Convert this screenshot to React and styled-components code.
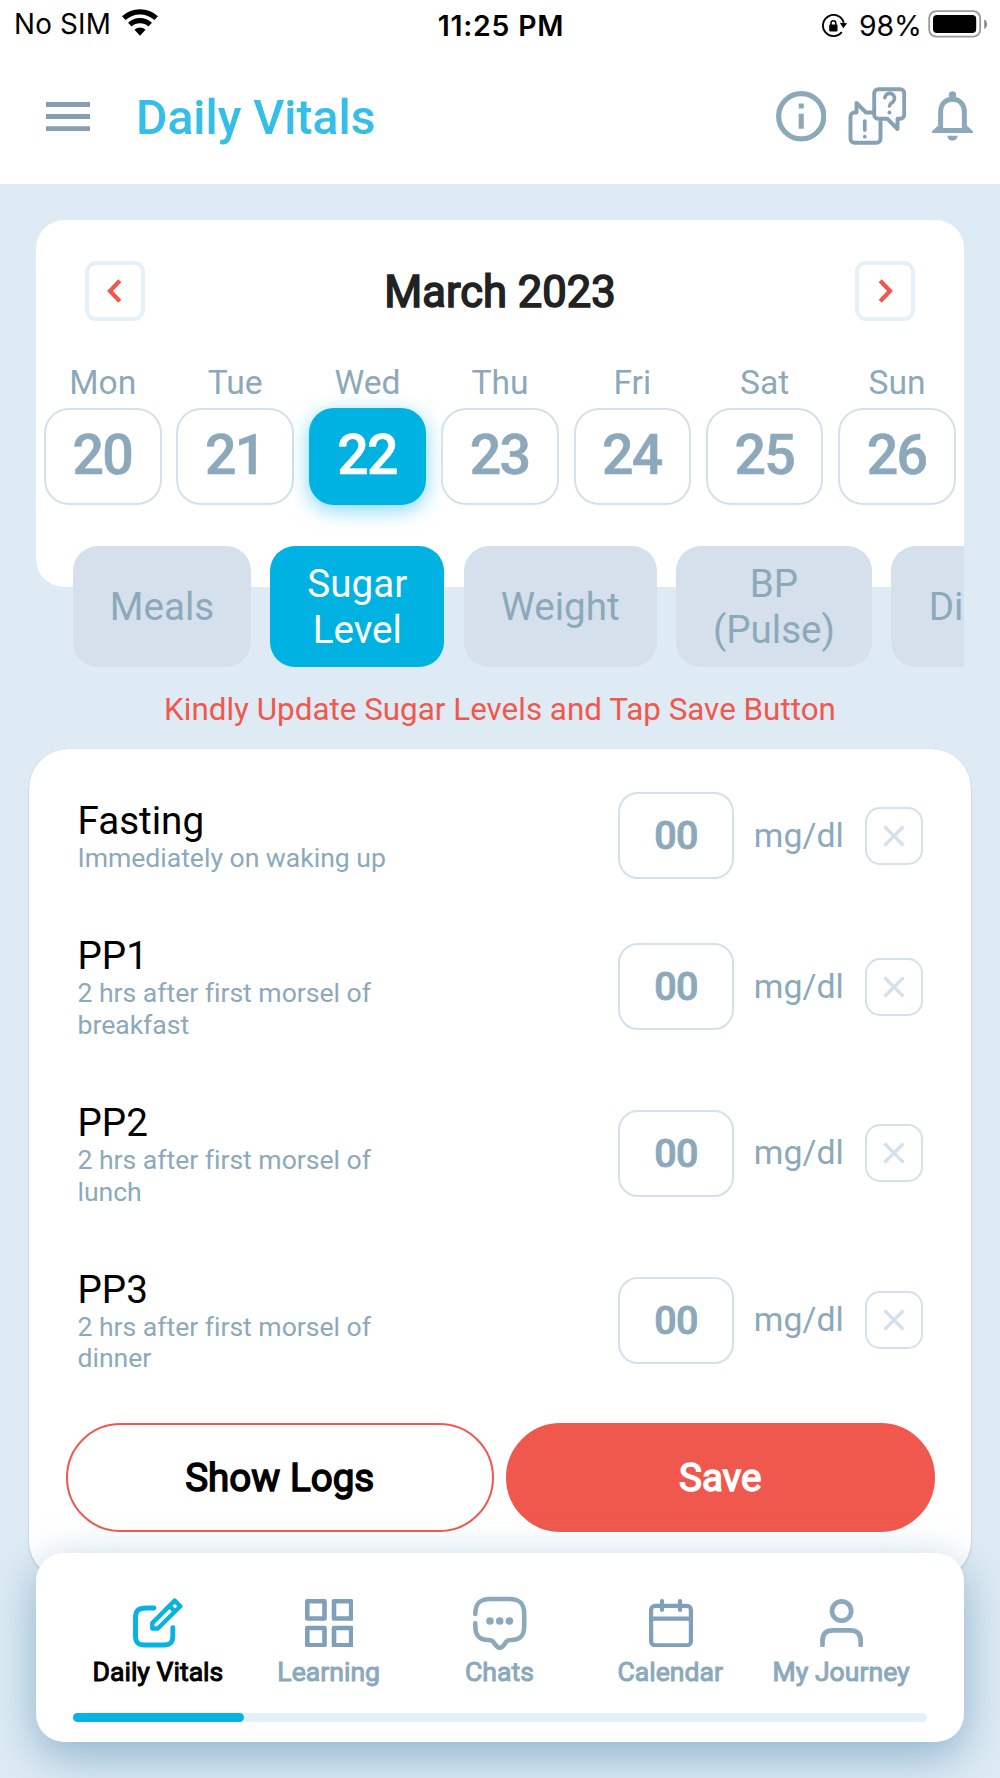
import React, { useState } from 'react';
import styled, { createGlobalStyle, css } from 'styled-components';

const GlobalStyle = createGlobalStyle`
  :root {
    --page: #deebf4;
    --steel: #8ca9bc;
    --line: #d4e1ed;
    --pale: #e4f1f9;
    --blue: #00b2e1;
    --coral: #f1584d;
  }

  * {
    box-sizing: border-box;
  }

  body {
    margin: 0;
    font-family: Roboto, 'Liberation Sans', sans-serif;
  }

  button {
    font-family: inherit;
    padding: 0;
    cursor: pointer;
  }

  svg {
    display: block;
    flex-shrink: 0;
  }
`;

// Styled components
const Screen = styled.div`
  display: flex;
  flex-direction: column;
  width: 1000px;
  height: 1778px;
  overflow: hidden;
  background: var(--page);
`;

const StatusBar = styled.div`
  display: grid;
  grid-template-columns: 1fr auto 1fr;
  height: 50px;
  padding: 0 12px 0 14px;
  background: white;
  color: black;
  font-family: Inter, 'Liberation Sans', sans-serif;
  font-size: 27.8px;
  line-height: 49px;
`;

const StatusLeft = styled.div`
  display: flex;
  gap: 11px;
  letter-spacing: 0.2px;

  svg {
    margin-top: 9px;
  }
`;

const Clock = styled.div`
  font-size: 28.4px;
  font-weight: 600;
  line-height: 52px;
  letter-spacing: 0.8px;
`;

const StatusRight = styled.div`
  display: flex;
  justify-content: flex-end;
  line-height: 52px;
  font-size: 28.4px;

  svg:first-child {
    margin: 14px 11px 0 0;
  }

  svg:last-child {
    margin: 10px 0 0 6px;
  }
`;

const Header = styled.header`
  display: flex;
  align-items: center;
  height: 133.5px;
  padding: 0 27px 0 46px;
  background: white;
  color: var(--steel);
`;

const Title = styled.h1`
  flex: 1;
  margin: 2px 0 0 46px;
  font-size: 48.3px;
  font-weight: 500;
  line-height: 56px;
  letter-spacing: -0.1px;
  color: #35bfe8;
`;

const HeaderActions = styled.div`
  display: flex;
  align-items: center;
  margin-top: -1px;

  svg:nth-child(2) {
    margin: 0 26px 0 21.5px;
  }
`;

const CalendarCard = styled.section`
  flex-shrink: 0;
  height: 367px;
  margin: 36.5px 36px 0;
  padding-top: 41px;
  border-radius: 28px;
  background: white;
`;

const MonthRow = styled.div`
  display: flex;
  align-items: center;
  justify-content: space-between;
  margin: 0 49px;
`;

const MonthButton = styled.button`
  display: grid;
  place-items: center;
  width: 60px;
  height: 60px;
  border: 4.5px solid var(--pale);
  border-radius: 11px;
  background: white;
  color: var(--coral);
`;

const Month = styled.h2`
  margin: 3px 0 0;
  font-size: 43.5px;
  font-weight: 400;
  line-height: 52px;
  color: #222;
  -webkit-text-stroke: 1.6px #222;
`;

const Week = styled.div`
  display: grid;
  grid-template-columns: repeat(7, 117.5px);
  column-gap: 14.9px;
  margin: 42px 0 0 8px;
`;

const Day = styled.div`
  text-align: center;
  color: var(--steel);
  font-size: 33.6px;
  line-height: 40px;
`;

const DayNumber = styled.button`
  display: block;
  width: 100%;
  height: 97px;
  margin-top: 5px;
  padding: 0 1px 1px 0;
  border: 2.4px solid var(--line);
  border-radius: 25px;
  background: white;
  color: var(--steel);
  font-size: 55.5px;
  font-weight: 500;
  line-height: 88px;
  letter-spacing: -1.8px;
  -webkit-text-stroke: 0.6px currentColor;

  ${({ $active }) => $active && css`
    border-color: var(--blue);
    background: var(--blue);
    color: white;
    box-shadow: 0 5px 20px rgba(0, 178, 255, 0.5);
  `}
`;

const Tabs = styled.div`
  display: flex;
  flex-shrink: 0;
  gap: 19.2px;
  margin: -41px 36px 0;
  padding-left: 37px;
  overflow: hidden;
`;

const Tab = styled.button`
  flex-shrink: 0;
  width: ${({ $width }) => $width}px;
  height: 121px;
  border: 0;
  border-radius: 25px;
  background: ${({ $active }) => ($active ? 'var(--blue)' : '#d5e0ec')};
  color: ${({ $active }) => ($active ? 'white' : 'var(--steel)')};
  font-size: 38.6px;
  line-height: 45.4px;
  white-space: pre-line;
`;

const Notice = styled.p`
  flex-shrink: 0;
  height: 82px;
  margin: 0;
  padding-top: 2px;
  text-align: center;
  font-size: 31.4px;
  line-height: 82px;
  color: var(--coral);
`;

const LevelsCard = styled.section`
  flex-shrink: 0;
  height: 832px;
  margin: 0 29px;
  padding: 19.4px 36.5px 0;
  border-radius: 40px;
  background: white;
  box-shadow: 0 1px 2px rgba(80, 110, 140, 0.4);
`;

const LevelRow = styled.div`
  display: flex;
  align-items: center;
  height: ${({ $tall }) => ($tall ? 166.7 : 135)}px;
  padding: 0 12px 0 12px;
`;

const LevelText = styled.div`
  flex: 1;

  h3 {
    margin: 0;
    padding-top: 1px;
    font-size: 38.6px;
    font-weight: 400;
    line-height: 44.3px;
    color: black;
  }

  p {
    max-width: 312px;
    margin: -1px 0 0;
    font-size: 26.6px;
    line-height: 31.4px;
    letter-spacing: -0.03px;
    color: var(--steel);
  }
`;

const LevelInput = styled.input`
  width: 116px;
  height: 87px;
  padding: 0;
  border: 2.4px solid var(--line);
  border-radius: 20px;
  outline: none;
  background: white;
  text-align: center;
  font: 500 39.5px Roboto, sans-serif;
  letter-spacing: -0.6px;
  color: var(--steel);

  &::placeholder {
    color: var(--steel);
    opacity: 1;
    -webkit-text-stroke: 0.9px var(--steel);
  }
`;

const Unit = styled.span`
  width: 130.5px;
  padding-right: 1px;
  text-align: center;
  font-size: 33.8px;
  line-height: 40px;
  color: var(--steel);
`;

const ClearButton = styled.button`
  display: grid;
  place-items: center;
  width: 58px;
  height: 58px;
  border: 2.4px solid var(--line);
  border-radius: 15px;
  background: white;
  color: var(--line);
`;

const Actions = styled.div`
  display: grid;
  grid-template-columns: 1fr 1fr;
  gap: 12px;
  margin-top: 19.6px;
`;

const ActionButton = styled.button`
  height: 109px;
  border: 2.4px solid var(--coral);
  border-radius: 55px;
  background: ${({ $filled }) => ($filled ? 'var(--coral)' : 'white')};
  color: ${({ $filled }) => ($filled ? 'white' : 'black')};
  font-size: 38.6px;
  line-height: 46px;
  -webkit-text-stroke: 1.5px currentColor;
`;

const BottomNav = styled.nav`
  position: relative;
  flex-shrink: 0;
  height: 189px;
  margin: -28px 36px 0;
  padding: 43px 37px 0;
  border-radius: 28px;
  background: white;
  box-shadow: 0 14px 46px rgba(80, 135, 175, 0.57);
`;

const NavItems = styled.div`
  display: grid;
  grid-template-columns: repeat(5, 1fr);
`;

const NavItem = styled.button`
  display: flex;
  flex-direction: column;
  align-items: center;
  border: 0;
  background: none;
  color: var(--steel);
`;

const NavIcon = styled.div`
  display: grid;
  place-items: center;
  height: 54px;
  color: ${({ $color }) => $color || 'var(--steel)'};
`;

const NavLabel = styled.span`
  margin-top: 6px;
  padding-right: 1px;
  font-size: 26.6px;
  line-height: 32px;
  white-space: nowrap;
  color: ${({ $active }) => ($active ? 'black' : 'var(--steel)')};
  -webkit-text-stroke: 1px currentColor;
`;

const Track = styled.div`
  height: 9.6px;
  margin-top: 24.5px;
  border-radius: 5px;
  background: var(--pale);
`;

const TrackFill = styled.div`
  width: 20%;
  height: 100%;
  border-radius: 5px;
  background: #09b3e0;
`;

// Icons
const WifiIcon = () => (
  <svg width="36" height="27" viewBox="0 0 36 27" fill="none" stroke="black" strokeWidth="5.2">
    <path d="M1.8 9.1a24 24 0 0 1 32.4 0M7.8 15.7a15 15 0 0 1 20.4 0" />
    <path d="M18 26.7l-5.5-6a8.2 8.2 0 0 1 11 0z" fill="black" stroke="none" />
  </svg>
);

const RotationLockIcon = () => (
  <svg width="26" height="24" viewBox="0 0 26 24" fill="none" stroke="black" strokeWidth="1.9">
    <path d="M21.8 8.8A10.6 10.6 0 1 0 19.8 18.2" />
    <path d="M17.8 8.8l7.4 0.4-3.9 5z" fill="black" stroke="none" />
    <path d="M9 11V9.2a2.4 2.4 0 0 1 4.8 0V11" strokeWidth="1.5" />
    <rect x="7.2" y="10.6" width="8.3" height="6.9" rx="1" fill="black" stroke="none" />
  </svg>
);

const BatteryIcon = () => (
  <svg width="60" height="28" viewBox="0 0 60 28">
    <rect x="1.2" y="1.2" width="51" height="25.4" rx="7" fill="none" stroke="#999" strokeWidth="1.8" />
    <rect x="5" y="5" width="43.2" height="18" rx="4" fill="black" />
    <path d="M56.2 9.5c3.8 1.3 3.8 8 0 9.4z" fill="#888" />
  </svg>
);

const MenuIcon = () => (
  <svg width="44" height="30" viewBox="0 0 44 30" fill="none" stroke="#879fb3" strokeWidth="4.8">
    <path d="M0 2.5h44M0 14.5h44M0 26.7h44" />
  </svg>
);

const InfoIcon = () => (
  <svg width="50.5" height="50.5" viewBox="0 0 50.5 50.5">
    <circle cx="25.25" cy="25.25" r="22.6" fill="none" stroke="currentColor" strokeWidth="5.2" />
    <path d="M22.7 12.6h5.1v5h-5.1zM22.7 22.7h5.1v15h-5.1z" fill="currentColor" />
  </svg>
);

const QuestionsIcon = () => (
  <svg width="58.5" height="58" viewBox="0 0 58.5 58" fill="none" stroke="#87a1b4" strokeWidth="3.9" strokeLinejoin="round">
    <path d="M30.2 2.3h22a4 4 0 0 1 4 4v21.4a4 4 0 0 1-4 4h-2.7V42L39.2 31.7h-9a4 4 0 0 1-4-4V6.3a4 4 0 0 1 4-4z" />
    <path d="M32.5 33.5v18.2a4 4 0 0 1-4 4h-22a4 4 0 0 1-4-4V29.5a4 4 0 0 1 4-4h2V16l9.5 9.5h7" />
    <path d="M16.8 34v9M36.8 10.6a4.9 4.9 0 1 1 8.2 4.2c-1.8 1.5-3.4 2-3.5 4.2" strokeLinecap="round" strokeWidth="3.7" />
    <circle cx="16.8" cy="49.7" r="1.9" fill="#87a1b4" stroke="none" />
    <circle cx="41.5" cy="25.5" r="2" fill="#87a1b4" stroke="none" />
  </svg>
);

const BellIcon = () => (
  <svg width="41" height="50" viewBox="0 0 41 50" fill="currentColor">
    <circle cx="20.5" cy="4" r="3.7" />
    <path d="M8.6 39V21.5c0-8.5 4.8-13.3 11.9-13.3s11.9 4.8 11.9 13.3V39" fill="none" stroke="currentColor" strokeWidth="5" />
    <path d="M6.1 34.5L0 40.3V42h41v-1.7l-6.1-5.8V37H6.1z" />
    <path d="M15.4 44.7h10.2a5.1 5 0 0 1-10.2 0z" />
  </svg>
);

const ChevronIcon = ({ right }) => (
  <svg width="18" height="24" viewBox="0 0 18 24" fill="none" stroke="currentColor" strokeWidth="4.2">
    <path d={right ? 'M4.2 1.8L14 12 4.2 22.2' : 'M13.8 1.8L4 12l9.8 10.2'} />
  </svg>
);

const CrossIcon = () => (
  <svg width="22" height="22" viewBox="0 0 22 22" fill="none" stroke="currentColor" strokeWidth="3.2">
    <path d="M1.5 1.5l19 19M20.5 1.5l-19 19" />
  </svg>
);

const EditIcon = () => (
  <svg width="50" height="50" viewBox="0 0 50 50" fill="none" stroke="currentColor" strokeWidth="4.9" strokeLinecap="round" strokeLinejoin="round">
    <path d="M21 10h-7.5C5.5 10 2.5 12.5 2.5 20v18c0 6.5 3 9 9 9H31c6 0 8.8-2.5 8.8-9v-8.2" />
    <path d="M19.3 30.5v-5.4L41.7 2.6l5.6 5.6-22.5 22.3zM36.5 8l5.4 5.4" strokeWidth="4.4" />
  </svg>
);

const GridIcon = () => (
  <svg width="48.5" height="48.5" viewBox="0 0 48.5 48.5" fill="none" stroke="currentColor" strokeWidth="4.6" strokeLinejoin="round">
    <path d="M2.3 2.3h17.2v17.2H2.3zM29 2.3h17.2v17.2H29zM2.3 29h17.2v17.2H2.3zM29 29h17.2v17.2H29z" />
  </svg>
);

const ChatIcon = () => (
  <svg width="53.5" height="54" viewBox="0 -0.7 53.5 54" fill="none" stroke="currentColor" strokeWidth="4.6" strokeLinecap="round">
    <path d="M2.3 17.2C2.3 6.5 6.8 2.3 17.5 2.3H36c10.7 0 15.2 4.2 15.2 14.9V29c0 10.7-4.5 14.2-13.2 14.3-5 .1-4.5 1.7-7 4.9-3 4-5.5 4-8.5 0-2.5-3.2-2-4.8-7-4.9C6.8 43.2 2.3 39.7 2.3 29v-2.4" />
    <g fill="currentColor" stroke="none">
      <circle cx="17" cy="24.3" r="3.8" />
      <circle cx="26.7" cy="24.3" r="3.8" />
      <circle cx="36.4" cy="24.3" r="3.8" />
    </g>
  </svg>
);

const CalendarIcon = () => (
  <svg width="44" height="48.5" viewBox="0 0 44 48.5" fill="none" stroke="currentColor" strokeWidth="4.2" strokeLinecap="round">
    <rect x="2.1" y="6.8" width="39.8" height="39.5" rx="4" />
    <path d="M2.1 19.7h39.8M13 2.1v8.8M31 2.1v8.8" />
  </svg>
);

const PersonIcon = () => (
  <svg width="43.2" height="48.5" viewBox="0 0 43.2 48.5" fill="none" stroke="currentColor" strokeWidth="4.7" strokeLinecap="round">
    <circle cx="21.6" cy="12" r="9.6" />
    <path d="M2.5 46v-4c0-7 3.5-10.7 10.5-10.7h17.2c7 0 10.5 3.7 10.5 10.7v4" />
  </svg>
);

const days = [
  { name: 'Mon', date: 20 },
  { name: 'Tue', date: 21 },
  { name: 'Wed', date: 22 },
  { name: 'Thu', date: 23 },
  { name: 'Fri', date: 24 },
  { name: 'Sat', date: 25 },
  { name: 'Sun', date: 26 },
];

const tabs = [
  { label: 'Meals', width: 178 },
  { label: 'Sugar\nLevel', width: 174.2 },
  { label: 'Weight', width: 193.2 },
  { label: 'BP\n(Pulse)', width: 196 },
  { label: 'Diet', width: 143 },
];

const levels = [
  { name: 'Fasting', hint: 'Immediately on waking up' },
  { name: 'PP1', hint: '2 hrs after first morsel of breakfast', tall: true },
  { name: 'PP2', hint: '2 hrs after first morsel of lunch', tall: true },
  { name: 'PP3', hint: '2 hrs after first morsel of dinner', tall: true },
];

const navItems = [
  { label: 'Daily Vitals', icon: <EditIcon />, color: '#09b3e0', active: true },
  { label: 'Learning', icon: <GridIcon />, color: '#7f9fba' },
  { label: 'Chats', icon: <ChatIcon /> },
  { label: 'Calendar', icon: <CalendarIcon />, color: '#7f9fba' },
  { label: 'My Journey', icon: <PersonIcon /> },
];

const DailyVitals = () => {
  const [selectedDate, setSelectedDate] = useState(22);
  const [selectedTab, setSelectedTab] = useState('Sugar\nLevel');
  const [values, setValues] = useState({});

  const handleChange = (name, value) => {
    setValues({ ...values, [name]: value });
  };

  return (
    <Screen>
      <StatusBar>
        <StatusLeft>
          No SIM
          <WifiIcon />
        </StatusLeft>
        <Clock>11:25 PM</Clock>
        <StatusRight>
          <RotationLockIcon />
          98%
          <BatteryIcon />
        </StatusRight>
      </StatusBar>

      <Header>
        <MenuIcon />
        <Title>Daily Vitals</Title>
        <HeaderActions>
          <InfoIcon />
          <QuestionsIcon />
          <BellIcon />
        </HeaderActions>
      </Header>

      <CalendarCard>
        <MonthRow>
          <MonthButton aria-label="Previous week"><ChevronIcon /></MonthButton>
          <Month>March 2023</Month>
          <MonthButton aria-label="Next week"><ChevronIcon right /></MonthButton>
        </MonthRow>
        <Week>
          {days.map((day) => (
            <Day key={day.date}>
              {day.name}
              <DayNumber $active={day.date === selectedDate} onClick={() => setSelectedDate(day.date)}>
                {day.date}
              </DayNumber>
            </Day>
          ))}
        </Week>
      </CalendarCard>

      {/* Tabs overlap the bottom of the calendar card */}
      <Tabs>
        {tabs.map((tab) => (
          <Tab
            key={tab.label}
            $width={tab.width}
            $active={tab.label === selectedTab}
            onClick={() => setSelectedTab(tab.label)}
          >
            {tab.label}
          </Tab>
        ))}
      </Tabs>

      <Notice>Kindly Update Sugar Levels and Tap Save Button</Notice>

      <LevelsCard>
        {levels.map((level) => (
          <LevelRow key={level.name} $tall={level.tall}>
            <LevelText>
              <h3>{level.name}</h3>
              <p>{level.hint}</p>
            </LevelText>
            <LevelInput
              placeholder="00"
              value={values[level.name] || ''}
              onChange={(e) => handleChange(level.name, e.target.value)}
            />
            <Unit>mg/dl</Unit>
            <ClearButton aria-label="Clear" onClick={() => handleChange(level.name, '')}>
              <CrossIcon />
            </ClearButton>
          </LevelRow>
        ))}
        <Actions>
          <ActionButton>Show Logs</ActionButton>
          <ActionButton $filled>Save</ActionButton>
        </Actions>
      </LevelsCard>

      <BottomNav>
        <NavItems>
          {navItems.map((item) => (
            <NavItem key={item.label}>
              <NavIcon $color={item.color}>{item.icon}</NavIcon>
              <NavLabel $active={item.active}>{item.label}</NavLabel>
            </NavItem>
          ))}
        </NavItems>
        <Track>
          <TrackFill />
        </Track>
      </BottomNav>
    </Screen>
  );
};

const App = () => (
  <>
    <GlobalStyle />
    <DailyVitals />
  </>
);

export default App;
